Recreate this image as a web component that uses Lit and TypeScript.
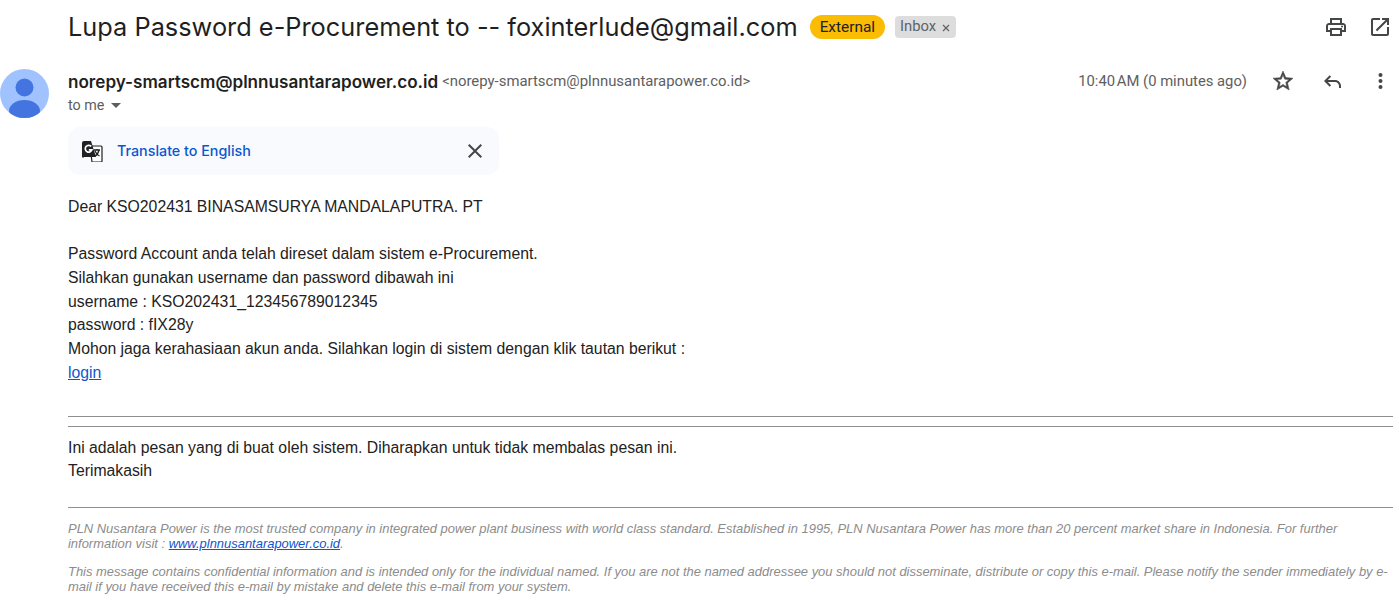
import { LitElement, html, css } from 'lit';
import { customElement } from 'lit/decorators.js';

@customElement('app-root')
export class AppRoot extends LitElement {
  static styles = css`
    :host {
      display: block;
      width: 1399px;
      height: 603px;
      overflow: hidden;
      background: #fff;
      font-family: Roboto, sans-serif;
      color: #202124;
    }

    .subject-row {
      display: flex;
      align-items: center;
      height: 54px;
      padding-left: 68px;
    }

    .subject {
      margin-top: -1px;
      font-family: Inter, sans-serif;
      font-size: 25.35px;
      font-weight: 400;
      color: #1f1f1f;
      white-space: nowrap;
    }

    .external {
      margin-left: 12px;
      height: 24px;
      line-height: 24px;
      padding: 0 10px;
      border-radius: 12px;
      background: #fbbc04;
      font-size: 15.4px;
      color: #202124;
    }

    .inbox {
      display: flex;
      align-items: center;
      gap: 6px;
      margin-left: 10px;
      height: 22px;
      padding: 0 6px 0 5px;
      border-radius: 4px;
      background: #dddddd;
      font-size: 14.8px;
      color: #5f6368;
    }

    .inbox-label {
      margin-top: -3px;
    }

    .inbox svg {
      margin-top: 2px;
    }

    .top-actions {
      margin-left: auto;
      display: flex;
      gap: 20px;
      padding-right: 7px;
    }

    .icon {
      display: block;
      fill: #444746;
    }

    .message {
      display: flex;
    }

    .avatar {
      flex: none;
      width: 49px;
      margin-top: 15px;
      height: 49px;
    }

    .content {
      flex: 1;
      margin-left: 19px;
      min-width: 0;
    }

    .sender-row {
      display: flex;
      align-items: center;
      height: 24px;
      margin-top: 15px;
    }

    .sender {
      font-family: Inter, sans-serif;
      font-size: 17.1px;
      font-weight: 600;
      color: #1f1f1f;
    }

    .address {
      margin-left: 4px;
      font-size: 14.9px;
      color: #5e5e5e;
    }

    .time {
      margin-left: auto;
      font-size: 14.8px;
      color: #5e5e5e;
    }

    .row-actions {
      display: flex;
      align-items: center;
      gap: 24px;
      margin-left: 24px;
      padding-right: 7px;
    }

    .star {
      margin-right: 1px;
      stroke: #444746;
      stroke-width: 0.5;
    }

    .to-me {
      display: flex;
      align-items: center;
      gap: 7px;
      height: 18px;
      margin-top: 3px;
      font-size: 14.3px;
      color: #5e5e5e;
    }

    .caret {
      width: 0;
      height: 0;
      border: 5px solid transparent;
      border-top: 5px solid #5e5e5e;
      border-bottom: 0;
    }

    .translate {
      display: flex;
      align-items: center;
      width: 431px;
      height: 48px;
      margin-top: 13px;
      border-radius: 12px;
      background: #f8fafd;
      box-sizing: border-box;
      padding: 0 12px 0 14px;
    }

    .translate-label {
      margin: -1px 0 0 14px;
      font-family: Inter, sans-serif;
      font-size: 14.3px;
      font-weight: 500;
      color: #0b57d0;
    }

    .translate-close {
      margin-left: auto;
    }

    .body {
      margin-top: 19.5px;
      margin-right: 6px;
      font-family: 'Liberation Sans', Arial, sans-serif;
      font-size: 15.77px;
      line-height: 23.76px;
      color: #222222;
    }

    .body a {
      color: #1155cc;
    }

    hr {
      border: 0;
      border-top: 1px solid #8f8f8f;
      margin: 0;
    }

    .rule-first {
      margin-top: 31.5px;
    }

    .rule-second {
      margin-top: 9px;
    }

    .rule-third {
      margin-top: 24px;
    }

    .closing {
      margin-top: 8.52px;
    }

    .legal {
      margin: 13px 6px 0 0;
      font-family: 'Liberation Sans', Arial, sans-serif;
      font-size: 12.95px;
      line-height: 15px;
      font-style: italic;
      color: #8c8c8c;
    }

    .legal + .legal {
      margin-top: 13px;
    }

    .legal a {
      color: #1155cc;
    }
  `;

  render() {
    return html`
      <div class="subject-row">
        <span class="subject">Lupa Password e-Procurement to -- foxinterlude@gmail.com</span>
        <span class="external">External</span>
        <span class="inbox"><span class="inbox-label">Inbox</span>
          <svg width="8" height="8" viewBox="0 0 8 8"><path d="M1 1l6 6M7 1L1 7" stroke="#5f6368" stroke-width="1.2"/></svg>
        </span>
        <div class="top-actions">
          <svg class="icon" width="24" height="24" viewBox="0 0 24 24"><path d="M19 8h-1V3H6v5H5c-1.66 0-3 1.34-3 3v6h4v4h12v-4h4v-6c0-1.66-1.34-3-3-3zM8 5h8v3H8V5zm8 14H8v-4h8v4zm2-4v-2H6v2H4v-4c0-.55.45-1 1-1h14c.55 0 1 .45 1 1v4h-2z"/><circle cx="18" cy="11.5" r="1"/></svg>
          <svg class="icon" width="24" height="24" viewBox="0 0 24 24"><path d="M19 19H5V5h7V3H5c-1.1 0-2 .9-2 2v14c0 1.1.9 2 2 2h14c1.1 0 2-.9 2-2v-7h-2v7zM14 3v2h3.59l-9.83 9.83 1.41 1.41L19 6.41V10h2V3h-7z"/></svg>
        </div>
      </div>

      <div class="message">
        <svg class="avatar" viewBox="0 0 49 49">
          <defs><clipPath id="round"><circle cx="24.5" cy="24.5" r="24.5"/></clipPath></defs>
          <g clip-path="url(#round)">
            <rect width="49" height="49" fill="#a0c3ff"/>
            <circle cx="24.5" cy="18.5" r="9" fill="#4374e0"/>
            <ellipse cx="24.5" cy="42" rx="15.5" ry="11" fill="#4374e0"/>
          </g>
        </svg>
        <div class="content">
          <div class="sender-row">
            <span class="sender">norepy-smartscm@plnnusantarapower.co.id</span>
            <span class="address">&lt;norepy-smartscm@plnnusantarapower.co.id&gt;</span>
            <span class="time">10:40\u202fAM (0 minutes ago)</span>
            <div class="row-actions">
              <svg class="icon star" width="24" height="24" viewBox="0 0 24 24"><path d="M22 9.24l-7.19-.62L12 2 9.19 8.63 2 9.24l5.46 4.73L5.82 21 12 17.27 18.18 21l-1.63-7.03L22 9.24zM12 15.4l-3.76 2.27 1-4.28-3.32-2.88 4.38-.38L12 6.1l1.71 4.04 4.38.38-3.32 2.88 1 4.28L12 15.4z"/></svg>
              <svg class="icon" width="24" height="24" viewBox="0 0 24 24"><path d="M9.7 6.3L4 12l5.7 5.7 1.4-1.4L7.8 13H15c2.2 0 4 1.8 4 4v2h2v-2c0-3.3-2.7-6-6-6H7.8l3.3-3.3-1.4-1.4z"/></svg>
              <svg class="icon" width="24" height="24" viewBox="0 0 24 24"><circle cx="12.5" cy="6" r="2"/><circle cx="12.5" cy="12" r="2"/><circle cx="12.5" cy="18" r="2"/></svg>
            </div>
          </div>
          <div class="to-me">to me <span class="caret"></span></div>
          <div class="translate">
            <svg width="21" height="21" viewBox="0 0 21 21">
              <path d="M8 5h11a1 1 0 0 1 1 1v14a1 1 0 0 1-1 1h-9z" fill="#fff" stroke="#202124" stroke-width="1.2"/>
              <path d="M2 0h7l5 16H2a1 1 0 0 1-2-1V2a2 2 0 0 1 2-2z" fill="#202124"/>
              <path d="M9.2 5.4a3.4 3.4 0 1 0 .7 3.4H6.8" fill="none" stroke="#fff" stroke-width="1.7"/>
              <path d="M12 9h6M15 8v1M17 9c-.5 2.5-2 5-4 6M13 10c.8 2 2.5 4 4.5 5" fill="none" stroke="#202124" stroke-width="1.3"/>
            </svg>
            <span class="translate-label">Translate to English</span>
            <svg class="translate-close icon" width="24" height="24" viewBox="0 0 24 24"><path d="M19 6.41L17.59 5 12 10.59 6.41 5 5 6.41 10.59 12 5 17.59 6.41 19 12 13.41 17.59 19 19 17.59 13.41 12z"/></svg>
          </div>
          <div class="body">
            <div>Dear KSO202431 BINASAMSURYA MANDALAPUTRA. PT</div>
            <br />
            <div>Password Account anda telah direset dalam sistem e-Procurement.</div>
            <div>Silahkan gunakan username dan password dibawah ini</div>
            <div>username : KSO202431_123456789012345</div>
            <div>password : fIX28y</div>
            <div>Mohon jaga kerahasiaan akun anda. Silahkan login di sistem dengan klik tautan berikut :</div>
            <div><a href="#">login</a></div>
            <hr class="rule-first" />
            <hr class="rule-second" />
            <div class="closing">Ini adalah pesan yang di buat oleh sistem. Diharapkan untuk tidak membalas pesan ini.</div>
            <div>Terimakasih</div>
            <hr class="rule-third" />
          </div>
          <p class="legal">PLN Nusantara Power is the most trusted company in integrated power plant business with world class standard. Established in 1995, PLN Nusantara Power has more than 20 percent market share in Indonesia. For further information visit : <a href="#">www.plnnusantarapower.co.id</a>.</p>
          <p class="legal">This message contains confidential information and is intended only for the individual named. If you are not the named addressee you should not disseminate, distribute or copy this e-mail. Please notify the sender immediately by e-mail if you have received this e-mail by mistake and delete this e-mail from your system.</p>
        </div>
      </div>
    `;
  }
}
